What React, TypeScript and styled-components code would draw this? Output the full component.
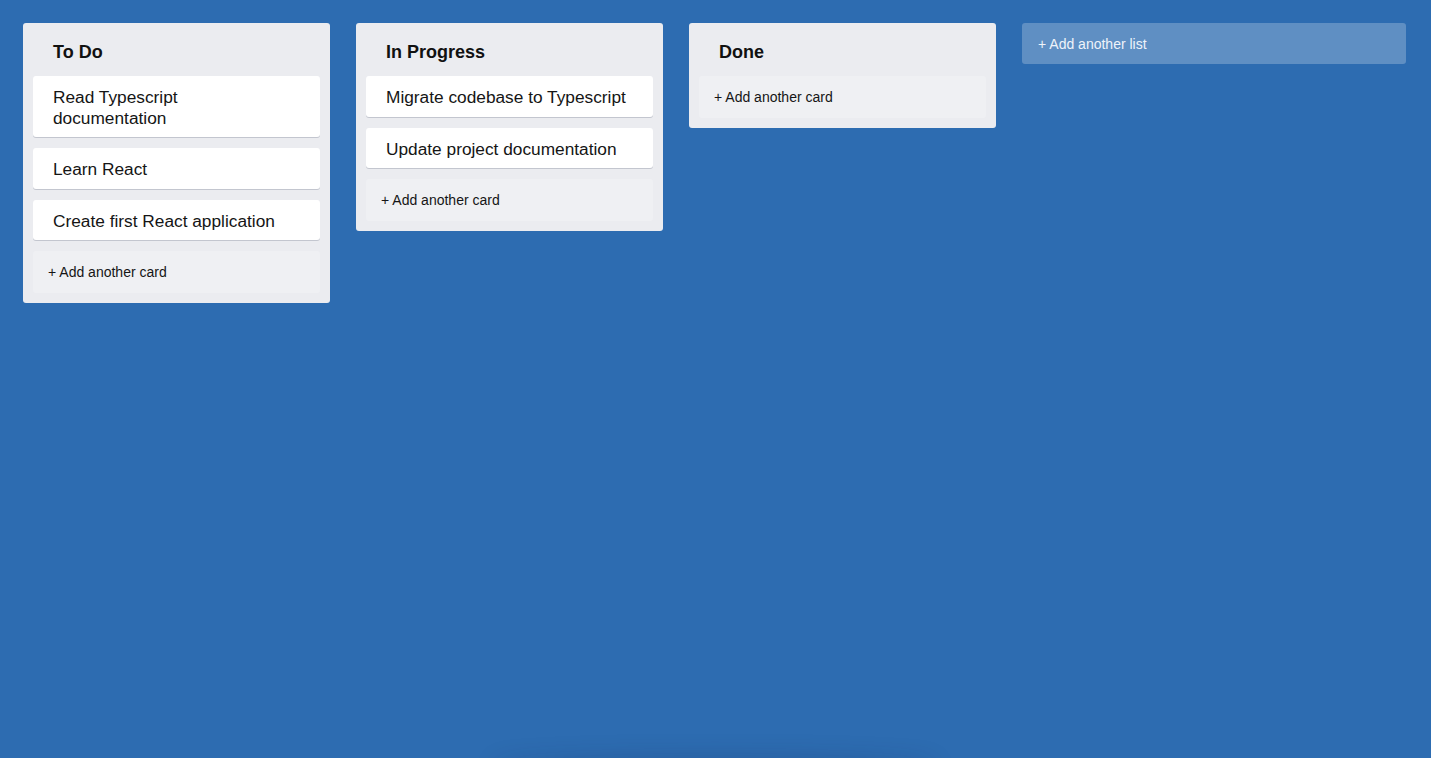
import React from 'react';
import styled, { createGlobalStyle } from 'styled-components';

const GlobalStyle = createGlobalStyle`
  html, body {
    margin: 0;
    padding: 0;
    height: 100%;
    background: #2d6cb1;
    font-family: "Liberation Sans", Arial, sans-serif;
    overflow: hidden;
  }
`;

const Board = styled.div`
  display: flex;
  align-items: flex-start;
  gap: 26px;
  padding: 23px 25px 23px 23px;
  min-height: 758px;
  box-sizing: border-box;
`;

const Column = styled.div`
  width: 307px;
  flex-shrink: 0;
  background: #ebecf0;
  border-radius: 3px;
  padding: 10px;
  box-sizing: border-box;
  display: flex;
  flex-direction: column;
  gap: 11px;
`;

const ColumnTitle = styled.h2`
  margin: 0;
  padding: 8px 20px 2px;
  font-size: 18px;
  line-height: 22px;
  font-weight: 700;
  color: #111;
`;

const Card = styled.div`
  background: #fff;
  border-radius: 3px;
  box-shadow: 0 1px 0 #c3c6cf;
  padding: 11px 25px 9px 20px;
  font-size: 17.3px;
  line-height: 20.5px;
  color: #151515;
`;

const AddCard = styled.button`
  all: unset;
  display: block;
  background: #eff0f3;
  border-radius: 3px;
  padding: 0 15px;
  height: 42px;
  line-height: 42px;
  font-size: 14px;
  color: #151515;
  cursor: pointer;
`;

const AddList = styled.button`
  all: unset;
  flex: 1;
  height: 41px;
  line-height: 42px;
  padding: 0 16px;
  background: rgba(255, 255, 255, 0.24);
  border-radius: 3px;
  color: #eef3fa;
  font-size: 14px;
  cursor: pointer;
`;

const BottomShade = styled.div`
  position: fixed;
  left: 490px;
  width: 450px;
  bottom: -20px;
  height: 20px;
  border-radius: 50%;
  box-shadow: 0 -3px 22px rgba(20, 40, 80, 0.18);
  pointer-events: none;
`;

interface IList {
  id: string;
  title: string;
  cards: string[];
}

const lists: IList[] = [
  {
    id: 'todo',
    title: 'To Do',
    cards: ['Read Typescript documentation', 'Learn React', 'Create first React application'],
  },
  {
    id: 'progress',
    title: 'In Progress',
    cards: ['Migrate codebase to Typescript', 'Update project documentation'],
  },
  { id: 'done', title: 'Done', cards: [] },
];

export default function App() {
  return (
    <>
      <GlobalStyle />
      <Board>
        {lists.map((list) => (
          <Column key={list.id}>
            <ColumnTitle>{list.title}</ColumnTitle>
            {list.cards.map((card) => (
              <Card key={card}>{card}</Card>
            ))}
            <AddCard>+ Add another card</AddCard>
          </Column>
        ))}
        <AddList>+ Add another list</AddList>
      </Board>
      <BottomShade />
    </>
  );
}
